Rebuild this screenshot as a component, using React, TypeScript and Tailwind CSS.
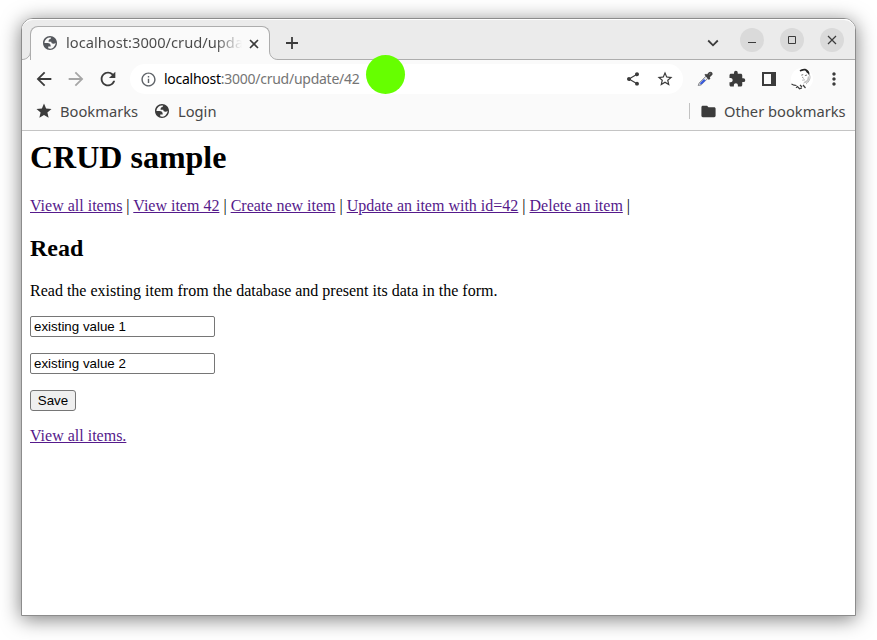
import React from 'react';
import {
  MdArrowBack,
  MdArrowForward,
  MdExtension,
  MdFolder,
  MdInfoOutline,
  MdMoreVert,
  MdRefresh,
  MdShare,
  MdStar,
  MdStarBorder,
} from 'react-icons/md';

function Globe({ className }: { className: string }) {
  return (
    <svg viewBox="2 2 20 20" className={`h-[14px] w-[14px] shrink-0 ${className}`}>
      <path
        d="M12 2C6.48 2 2 6.48 2 12s4.48 10 10 10 10-4.48 10-10S17.52 2 12 2zM4 12h4.4c3.407.022 4.922 1.73 4.543 5.127H9.488v2.47a8.004 8.004 0 0 0 10.498-8.083C19.327 12.504 18.332 13 17 13c-2.137 0-3.206-.916-3.206-2.75h-3.748c-.274-2.728.683-4.092 2.87-4.092 0-.975.327-1.597.811-1.97A8.004 8.004 0 0 0 4 12z"
        fill="currentColor"
        fillRule="evenodd"
      />
    </svg>
  );
}

function TabFlare({ flip = false }: { flip?: boolean }) {
  return (
    <svg viewBox="0 0 9 9" className={`h-[9px] w-[9px] shrink-0 ${flip ? '-scale-x-100' : ''}`}>
      <path d="M9 0 V9 H0 V8.5 C5 8.5 8.5 5 8.5 0Z" fill="#fafafa" />
      <path d="M8.5 0 C8.5 5 5 8.5 0 8.5" fill="none" stroke="#adadad" />
    </svg>
  );
}

function Eyedropper() {
  return (
    <svg viewBox="0 0 16 16" className="h-4 w-4">
      <path d="M1.2 14.5 L2.2 12 L9.2 5 L11.2 7 L4.2 13.9Z" fill="#e6e8ee" stroke="#85878c" strokeWidth="1" />
      <path d="M2.8 13.5 L3.8 11.3 L7 8.1 L8.6 9.6 L5 13Z" fill="#3659df" />
      <path d="M7.4 3.8 L9 2.8 L10 3.6 L11.6 1.5 C13.2 -.2 16.3 1.3 15.4 3.7 L12.8 6.3 L13.4 7.5 L11.9 9Z" fill="#414141" />
      <path d="M12 3.6 L13.5 2.2" stroke="#8b8b8b" />
    </svg>
  );
}

function Avatar() {
  return (
    <svg viewBox="0 0 22 22" className="h-[22px] w-[22px]">
      <circle cx="11" cy="11" r="11" fill="#fff" />
      <path d="M8.6 2.6 C10.5 .6 14.5 0 16.5 2 C18 3 19 5 18.2 7.4 L17 5.5 C15 4.9 15.5 2.5 13 2.6 L9.2 3.6Z" fill="#242424" />
      <path d="M10.3 7.2 L12.2 6.6 M13.9 7.6 L16 7 M11.3 9.2 L12.5 10.2" stroke="#777" strokeWidth="1" fill="none" />
      <path d="M17 8 C19.2 9 18.5 13 15.5 14.8 L12 15.6 L13.5 13.5 L16 12Z" fill="#c4c4c4" />
      <path d="M11.2 12.2 L14 11.8 M18.5 7 C20 10 18 14 15 16" stroke="#a5a5a5" strokeWidth=".8" fill="none" />
      <path d="M.5 16 L3 17.2 L5.5 17.5 M5 19.8 L6.5 18.6 L8.5 20.7 L11 20 M9 17 L11 19 M12 17 L14.5 20" fill="none" stroke="#3d3d3d" strokeWidth="1.2" />
    </svg>
  );
}

function TabStrip() {
  return (
    <div className="relative flex h-[41px] items-end rounded-t-[11px] border-t border-white bg-[#ebebeb]">
      <div className="absolute inset-x-0 bottom-0 h-px bg-[#adadad]" />
      <div className="relative flex items-end">
        <TabFlare />
        <div className="-mx-px flex h-[34px] w-[240px] items-center rounded-t-[8px] border border-b-0 border-[#adadad] bg-[#fafafa] pl-3">
          <Globe className="mb-px text-[#55585d]" />
          <div className="ml-[9px] mb-[3px] w-[176px] overflow-hidden whitespace-nowrap bg-gradient-to-r from-[#494949] from-85% to-transparent bg-clip-text text-[14.7px] leading-5 text-transparent">
            localhost:3000/crud/update/42
          </div>
          <svg viewBox="0 0 14 14" className="ml-[5px] h-[14px] w-[14px] shrink-0">
            <path d="M3 3 L11 11 M11 3 L3 11" stroke="#3b3b3b" strokeWidth="1.6" />
          </svg>
        </div>
        <TabFlare flip />
      </div>
      <svg viewBox="0 0 20 20" className="mb-[7px] ml-[4px] h-5 w-5">
        <path d="M10 4 V16 M4 10 H16" stroke="#3b3b3b" strokeWidth="1.8" />
      </svg>
      <div className="mb-[8px] ml-auto mr-[11px] flex items-center gap-[16px] self-end text-[#3b3b3b]">
        <svg viewBox="0 0 12 12" className="mr-[5px] mt-[6px] h-3 w-3">
          <path d="M1.2 3.5 L6 8.3 L10.8 3.5" fill="none" stroke="currentColor" strokeWidth="1.8" />
        </svg>
        <div className="flex gap-4">
          <div className="h-6 w-6 rounded-full bg-[#dadada]">
            <svg viewBox="0 0 24 24"><path d="M8 14.5 H16" stroke="currentColor" /></svg>
          </div>
          <div className="h-6 w-6 rounded-full bg-[#dadada]">
            <svg viewBox="0 0 24 24"><path d="M8.5 8.5 H15.5 V15.5 H8.5Z" fill="none" stroke="currentColor" /></svg>
          </div>
          <div className="h-6 w-6 rounded-full bg-[#dadada]">
            <svg viewBox="0 0 24 24"><path d="M8 8 L16 16 M16 8 L8 16" stroke="currentColor" strokeWidth="1.2" /></svg>
          </div>
        </div>
      </div>
    </div>
  );
}

function Toolbar() {
  return (
    <div className="flex h-[38px] items-center pl-[11px] text-[#3b3b3b]">
      <MdArrowBack className="h-[22px] w-[22px]" />
      <MdArrowForward className="ml-[10px] h-[22px] w-[22px] text-[#a6a6a6]" />
      <MdRefresh className="ml-[10px] h-[22px] w-[22px]" />
      <div className="ml-[11px] flex h-[30px] w-[553px] items-center rounded-full bg-white pl-[10px] pr-[9px]">
        <MdInfoOutline className="h-[17px] w-[17px] text-[#5f6368]" />
        <div className="ml-[7px] whitespace-nowrap text-[14px] leading-5 tracking-[-0.26px] text-[#757575]">
          <span className="text-black">localhost</span>:3000/crud/update/42
        </div>
        <MdShare className="ml-auto h-4 w-4" />
        <MdStarBorder className="ml-[15px] h-[18px] w-[18px]" />
      </div>
      <div className="ml-[14px] flex items-center">
        <Eyedropper />
        <MdExtension className="ml-[15px] h-[18px] w-[18px]" />
        <svg viewBox="0 0 14 14" className="ml-[16px] h-[14px] w-[14px]">
          <path d="M0 0 H14 V14 H0Z M2 2 V12 H9 V2Z" fill="currentColor" fillRule="evenodd" />
        </svg>
        <div className="ml-[15px]"><Avatar /></div>
        <MdMoreVert className="ml-[11px] h-5 w-5" />
      </div>
    </div>
  );
}

function BookmarksBar() {
  return (
    <div className="flex h-[33px] items-center border-b border-[#c4c4c4] pb-[6px] pl-[13px] pr-[10px] text-[14.7px] leading-5 text-[#474747]">
      <MdStar className="h-[18px] w-[18px] text-[#3b3b3b]" />
      <span className="mb-px ml-[7px] w-[78px] whitespace-nowrap">Bookmarks</span>
      <Globe className="ml-[17px] text-[#3b3b3b]" />
      <span className="mb-px ml-[9px] whitespace-nowrap">Login</span>
      <div className="ml-auto h-4 w-px bg-[#c2c2c2]" />
      <MdFolder className="ml-[10px] h-[17px] w-[17px] text-[#3b3b3b]" />
      <span className="mb-px ml-[7px] w-[121px] whitespace-nowrap">Other bookmarks</span>
    </div>
  );
}

const links = ['View all items', 'View item 42', 'Create new item', 'Update an item with id=42', 'Delete an item'];

function Page() {
  return (
    <div className="px-2 pt-2 font-['Liberation_Serif',serif] text-[16px] leading-[18px] text-black">
      <h1 className="text-[32px] font-bold leading-[37px]">CRUD sample</h1>
      <nav className="mt-[21px]">
        {links.map((link) => (
          <React.Fragment key={link}>
            <a className="text-[#551a8b] underline">{link}</a>{' | '}
          </React.Fragment>
        ))}
      </nav>
      <h2 className="mt-5 text-[24px] font-bold leading-[27px]">Read</h2>
      <p className="mt-5">Read the existing item from the database and present its data in the form.</p>
      <form className="mt-4 flex flex-col items-start gap-4 font-['Liberation_Sans',sans-serif] text-[13.333px] leading-[15px]">
        <input defaultValue="existing value 1" className="h-[21px] w-[185px] rounded-[2px] border border-[#767676] bg-white px-[3px]" />
        <input defaultValue="existing value 2" className="h-[21px] w-[185px] rounded-[2px] border border-[#767676] bg-white px-[3px]" />
        <button type="button" className="h-[21px] w-[46px] rounded-[3px] border border-[#767676] bg-[#efefef]">Save</button>
      </form>
      <p className="mt-4"><a className="text-[#551a8b] underline">View all items.</a></p>
    </div>
  );
}

export default function App() {
  return (
    <div className="h-[640px] w-[877px] overflow-hidden bg-white pl-[21px] pt-[18px]">
      <div className="relative h-[598px] w-[835px] rounded-t-[12px] border border-[#8c8c8c] bg-white shadow-[0_3px_20px_rgba(0,0,0,0.52)]">
        <div className="rounded-t-[11px] bg-[#fafafa] font-['Noto_Sans',sans-serif]">
          <TabStrip />
          <Toolbar />
          <BookmarksBar />
        </div>
        <Page />
        <div className="absolute left-[344px] top-[36px] h-[39px] w-[39px] rounded-full bg-[#66ff00]" />
      </div>
    </div>
  );
}
